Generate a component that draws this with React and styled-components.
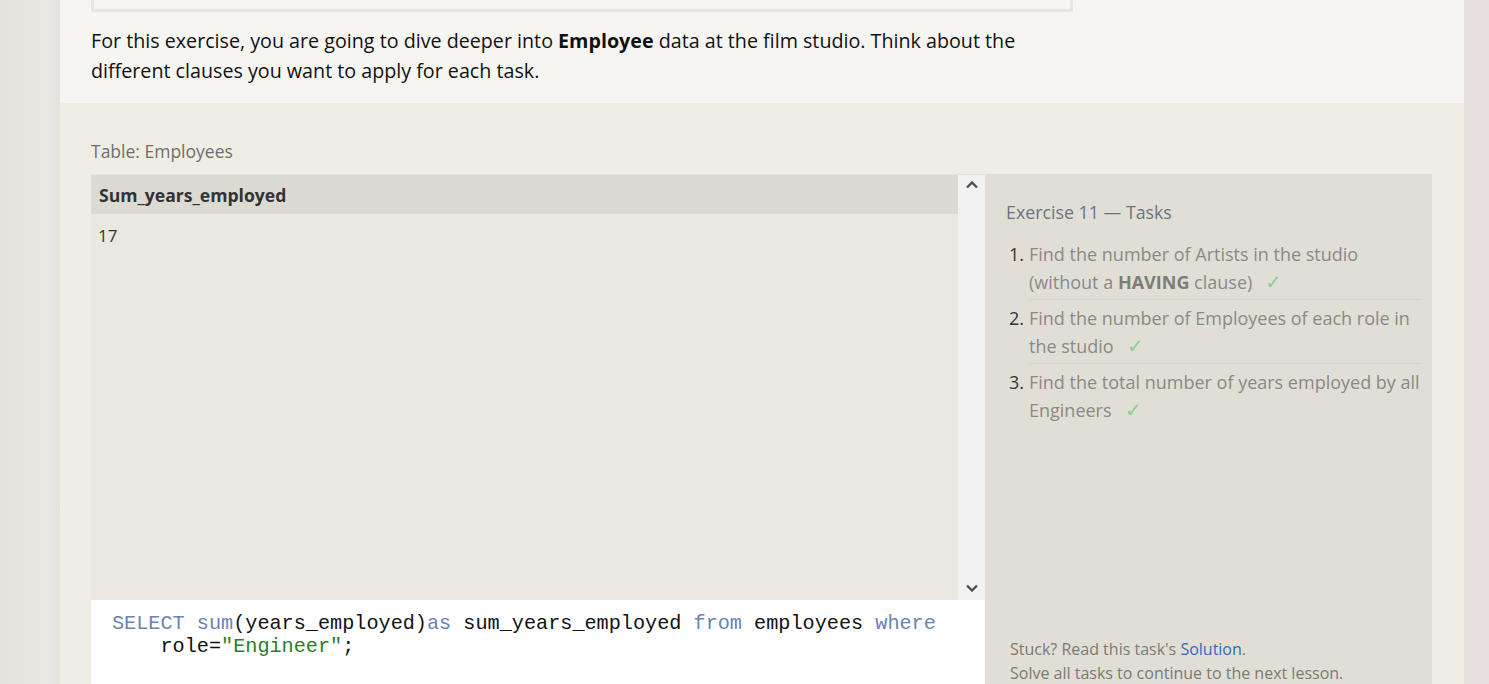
import React from 'react';
import styled, { createGlobalStyle } from 'styled-components';

const GlobalStyle = createGlobalStyle`
  html, body {
    margin: 0;
    padding: 0;
    height: 100%;
    overflow: hidden;
  }
  body {
    font-family: "Open Sans", "Noto Sans", sans-serif;
    background: #e5e0dd;
  }
`;

const Shell = styled.div`
  display: flex;
  min-height: 684px;
`;

const Gutter = styled.div`
  width: 60px;
  flex-shrink: 0;
  background: linear-gradient(to right, #e6e3df 0%, #ebe8e4 80%, #e4e1dc 100%);
`;

const Main = styled.div`
  width: 1404px;
  flex-shrink: 0;
  background: #f0ede5;
`;

const Intro = styled.section`
  background: #f6f5f1;
  padding: 0 31px 17px;
`;

const LessonBox = styled.div`
  width: 982px;
  height: 12px;
  box-sizing: border-box;
  border: 3px solid #e8e7df;
  border-top: none;
`;

const Lead = styled.p`
  margin: 14px 0 0;
  width: 970px;
  font-size: 19.7px;
  line-height: 30px;
  color: #111;

  strong {
    font-weight: 700;
  }
`;

const Exercise = styled.section`
  padding: 36px 32px 0 31px;
`;

const TableLabel = styled.div`
  font-size: 17.5px;
  line-height: 24px;
  color: #6f6f6f;
  margin-bottom: 11px;
`;

const Workspace = styled.div`
  display: flex;
`;

const LeftColumn = styled.div`
  width: 894px;
  flex-shrink: 0;
  display: flex;
  flex-direction: column;
`;

const ResultArea = styled.div`
  display: flex;
  height: 426px;
  border-top: 1px solid #e4e2da;
  box-sizing: border-box;
`;

const ResultTable = styled.div`
  flex: 1;
  background: #eae8e1;
`;

const HeaderCell = styled.div`
  background: #dcdbd1;
  height: 39px;
  padding: 0 8px;
  display: flex;
  align-items: center;
  font-size: 17.6px;
  font-weight: 700;
  color: #333;
`;

const BodyCell = styled.div`
  padding: 10px 7px 8px;
  font-size: 17px;
  line-height: 24px;
  color: #333;
`;

const Scrollbar = styled.div`
  width: 27px;
  background: #f1f1f1;
  display: flex;
  flex-direction: column;
  justify-content: space-between;
  align-items: center;
  padding: 6px 0 8px;
  box-sizing: border-box;
`;

const ArrowIcon = ({ down }) => (
  <svg width="12" height="8" viewBox="0 0 12 8">
    <path
      d={down ? 'M1 1.5 L6 6.5 L11 1.5' : 'M1 6.5 L6 1.5 L11 6.5'}
      fill="none"
      stroke="#505050"
      strokeWidth="2.4"
    />
  </svg>
);

const Editor = styled.pre`
  margin: 0;
  background: #fff;
  height: 120px;
  padding: 12px 21px;
  box-sizing: border-box;
  font-family: "Liberation Mono", "Courier New", monospace;
  font-size: 20.2px;
  line-height: 23px;
  color: #111;
`;

const Token = styled.span`
  color: ${(p) => (p.kind === 'kw' ? '#6a83b3' : p.kind === 'str' ? '#2a7d2a' : '#111')};
`;

const TaskPanel = styled.aside`
  flex: 1;
  background: #e1dfd5;
  padding: 24px 12px 0 21px;
  display: flex;
  flex-direction: column;
  height: 520px;
  box-sizing: border-box;
`;

const TaskTitle = styled.h3`
  margin: 0 0 14px;
  font-size: 17.8px;
  font-weight: 400;
  line-height: 28px;
  color: #6b7480;
`;

const TaskList = styled.ol`
  margin: 0;
  padding: 0;
  list-style: none;
`;

const TaskItem = styled.li`
  display: flex;
  font-size: 18px;
  line-height: 27px;
  padding: 1px 0 4px;
  position: relative;

  & + & {
    padding-top: 5px;
  }

  &:not(:last-child)::after {
    content: '';
    position: absolute;
    left: 23px;
    right: 0;
    bottom: 0;
    border-bottom: 1px solid #d6d4ca;
  }
`;

const TaskNum = styled.span`
  width: 23px;
  flex-shrink: 0;
  color: #333;
  text-align: right;
  padding-right: 1px;
  box-sizing: border-box;
  margin-left: -4px;
  margin-right: 4px;
`;

const TaskText = styled.span`
  color: #8a8a86;

  b {
    font-weight: 700;
    color: #7c7c78;
  }
`;

const Check = styled.span`
  color: #8ccf96;
  font-size: 20px;
  margin-left: 13px;
`;

const Footer = styled.div`
  margin-top: auto;
  font-size: 16px;
  line-height: 24px;
  color: #7a7a76;
  margin-left: 4px;
  margin-bottom: 9px;

  a {
    color: #2d6cc0;
    text-decoration: none;
  }
`;

const tasks = [
  <>Find the number of Artists in the studio (without a <b>HAVING</b> clause)</>,
  <>Find the number of Employees of each role in the studio</>,
  <>Find the total number of years employed by all Engineers</>,
];

export default function App() {
  return (
    <>
      <GlobalStyle />
      <Shell>
        <Gutter />
        <Main>
          <Intro>
            <LessonBox />
            <Lead>
              For this exercise, you are going to dive deeper into <strong>Employee</strong> data at the film
              studio. Think about the different clauses you want to apply for each task.
            </Lead>
          </Intro>
          <Exercise>
            <TableLabel>Table: Employees</TableLabel>
            <Workspace>
              <LeftColumn>
                <ResultArea>
                  <ResultTable>
                    <HeaderCell>Sum_years_employed</HeaderCell>
                    <BodyCell>17</BodyCell>
                  </ResultTable>
                  <Scrollbar>
                    <ArrowIcon />
                    <ArrowIcon down />
                  </Scrollbar>
                </ResultArea>
                <Editor>
                  <Token kind="kw">SELECT</Token> <Token kind="kw">sum</Token>(years_employed)
                  <Token kind="kw">as</Token> sum_years_employed <Token kind="kw">from</Token> employees{' '}
                  <Token kind="kw">where</Token>
                  {'\n    '}role=<Token kind="str">"Engineer"</Token>;
                </Editor>
              </LeftColumn>
              <TaskPanel>
                <TaskTitle>Exercise 11 — Tasks</TaskTitle>
                <TaskList>
                  {tasks.map((t, i) => (
                    <TaskItem key={i}>
                      <TaskNum>{i + 1}.</TaskNum>
                      <TaskText>
                        {t}
                        <Check>✓</Check>
                      </TaskText>
                    </TaskItem>
                  ))}
                </TaskList>
                <Footer>
                  Stuck? Read this task's <a href="#solution">Solution</a>.
                  <br />
                  Solve all tasks to continue to the next lesson.
                </Footer>
              </TaskPanel>
            </Workspace>
          </Exercise>
        </Main>
      </Shell>
    </>
  );
}
